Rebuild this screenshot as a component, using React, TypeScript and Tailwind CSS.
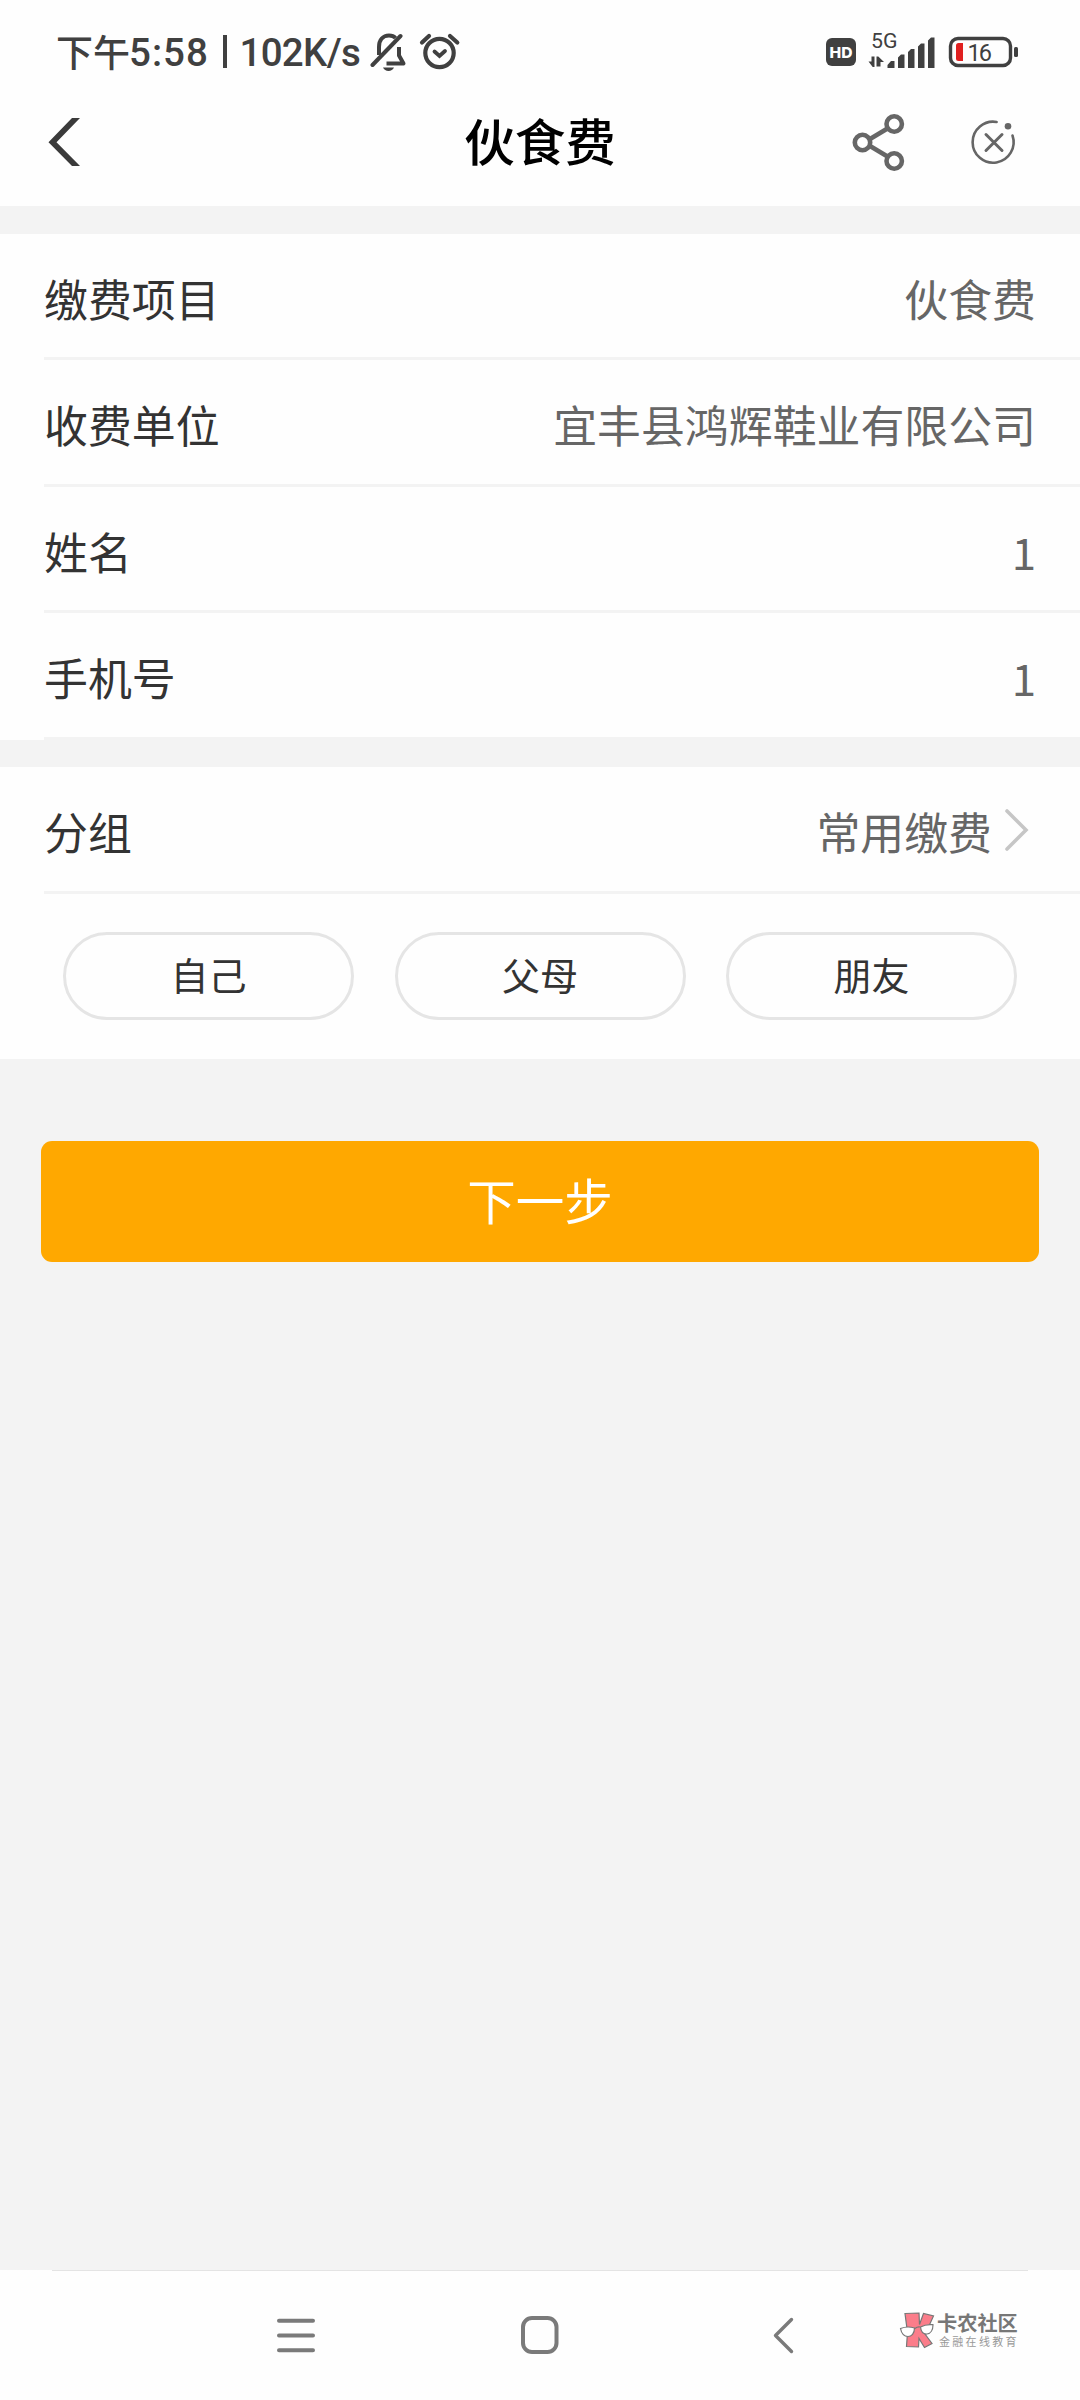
import clsx from "clsx";

const details = [
  { label: "缴费项目", value: "伙食费" },
  { label: "收费单位", value: "宜丰县鸿辉鞋业有限公司" },
  { label: "姓名", value: "1" },
  { label: "手机号", value: "1" },
];

const groups = ["自己", "父母", "朋友"];

const StatusBar = () => (
  <div className="flex h-[84px] items-start text-[#404040]">
    <div className="flex h-[84px] pl-[56px] pt-[24px] text-[37px] font-medium leading-[54px] whitespace-pre">
      <span className="w-[73px]">下午</span>
      <span className="w-[90px] font-[Roboto] text-[38.500px] leading-[57px] font-medium tracking-[1px]">5:58</span>
      <span className="mt-[11px] mr-[13px] ml-[4px] h-[33px] w-[3.500px] bg-[#404040]" />
      <span className="w-[130.500px] font-[Roboto] text-[38.500px] leading-[57px] font-medium tracking-[-0.700px]">102K/s</span>
    </div>
    <svg className="mt-[30px] h-[44px] w-[100px]" viewBox="370 30 100 44" fill="none" stroke="#404040" strokeWidth="4">
      <path d="M379 55V47c0-7 4-11.500 10-11.500 3 0 5 .8 6.500 2.500" />
      <path d="M399 47v8.500l4.500 8h-17" strokeLinejoin="round" />
      <path d="M372.500 65 400.500 36" strokeLinecap="round" />
      <path d="M383 67.500h11c-1 2.300-3 3.500-5.500 3.500s-4.500-1.200-5.500-3.500Z" fill="#404040" stroke="none" />
      <circle cx="439.500" cy="53" r="14.200" strokeWidth="4.200" />
      <path d="m434.500 51.500 5 4.500 5.500-5" strokeWidth="3.800" strokeLinecap="round" />
      <path d="m422 42.500 7-6.500M457.300 42.500 450 36" strokeWidth="4.200" strokeLinecap="round" />
    </svg>
    <svg className="mt-[20px] ml-auto mr-[60px] h-[54px] w-[196px]" viewBox="824 20 196 54" fill="#404040">
      <rect x="826" y="38" width="30" height="28" rx="6" />
      <text x="841" y="57.500" fontSize="15" fontWeight="800" fill="#fff" textAnchor="middle" fontFamily="Inter" textLength="23" lengthAdjust="spacingAndGlyphs">HD</text>
      <text x="871" y="47.500" fontSize="20.500" fontFamily="Roboto" textLength="26.500" lengthAdjust="spacingAndGlyphs">5G</text>
      <path d="M868.500 61.500h3V56.500h3v10.500h-1.800ZM876.500 56.500h1.800l5.700 5.500h-3.500V66.500h-4Z" />
      <path d="M887.500 68v-3l3.500-4h3.500v7ZM898 68V57.500l3-3h3.500V68ZM908 68V52l3-3h3.500V68ZM918 68V46.500l3-3h3.500V68ZM928 68V40.500l3-3h3.500V68Z" />
      <rect x="950.500" y="38.500" width="60" height="27" rx="7.500" fill="none" stroke="#404040" strokeWidth="3.400" />
      <rect x="1014" y="47" width="4" height="10" rx="1.500" />
      <path d="M958.500 43h4.500v18h-4.500q-2.500 0-2.500-2.500v-13q0-2.500 2.500-2.500Z" fill="#e02020" />
      <text x="967.500" y="61" fontSize="23.500" fontFamily="Roboto" textLength="24.500">16</text>
    </svg>
  </div>
);

const Header = () => (
  <header className="flex h-[122px] items-start justify-between">
    <svg className="mt-[28px] ml-[44px] h-[60px] w-[196px]" viewBox="44 112 196 60" fill="#3a3a3a">
      <path d="M72 118h8L56.500 142.300 80 166h-8L48.500 142.300Z" />
    </svg>
    <h1 className="mt-[19px] text-[50.500px] font-medium leading-[72px] text-black">伙食费</h1>
    <svg className="mt-[28px] mr-[60px] h-[60px] w-[180px]" viewBox="840 112 180 60" fill="none" stroke="#666" strokeWidth="4.600">
      <circle cx="862.500" cy="142.500" r="7.700" />
      <circle cx="894.200" cy="124" r="7.700" />
      <circle cx="894.200" cy="161" r="7.700" />
      <path d="m870 139 17.500-10.500M870 146l17.500 10.500" />
      <g strokeWidth="2.600" strokeLinecap="round">
        <path d="M996.600 122A20.500 20.500 0 1 0 1012.500 135.500" />
        <path d="m986 134.500 16 16M1002 134.500l-16 16" strokeWidth="3" />
      </g>
      <circle cx="1008" cy="126.300" r="3.300" fill="#666" stroke="none" />
    </svg>
  </header>
);

const Row = ({ label, value, arrow = false }: { label: string; value: string; arrow?: boolean }) => (
  <div
    className={clsx(
      "ml-[44px] flex h-[126.500px] items-center border-b-[3px] border-[#f3f3f3] pt-[5px] text-[43.900px] leading-[64px]",
      arrow ? "pr-[51px]" : "pr-[44px]"
    )}
  >
    <span className="text-[#333]">{label}</span>
    <span className="ml-auto text-[#666]">{value}</span>
    {arrow && (
      <svg className="ml-[12px] mb-[3px] h-[42px] w-[25px]" viewBox="0 0 25 42" fill="none" stroke="#c6c6c6" strokeWidth="3.600">
        <path d="m3 2 19 19L3 40" strokeLinecap="round" />
      </svg>
    )}
  </div>
);

const NavBar = () => (
  <nav className="flex h-[130px] flex-col bg-[#fefefe]">
    <div className="mx-[52px] h-px bg-[#e4e4e4]" />
    <div className="flex pt-[39px]">
      <svg className="ml-[270px] h-[50px] w-[540px]" viewBox="270 2310 540 50" fill="none" stroke="#7a7a7a" strokeWidth="4">
        <path d="M279 2320.800h34M279 2335.500h34M279 2350.300h34" strokeLinecap="round" />
        <rect x="523" y="2318" width="33.500" height="34" rx="9" />
        <path d="m791.500 2319.500-16 16 16 16" strokeWidth="3.400" strokeLinecap="round" strokeLinejoin="round" />
      </svg>
      <svg className="ml-[88px] h-[40px] w-[39px]" viewBox="898 2310 39 40" fill="#fb7d8a" stroke="#777" strokeWidth="1.200">
        <path d="M905 2313.500l14-.5.500 11.500 4-11 10 2.500-5 11-5 5 8.500 11.500-7.500 4-5.500-9-.500 8.500-12-.500 1-14Z" />
        <path d="M900.500 2328.500c5-2 9-2 14-.5 0 5.500-3 8.500-6.500 8.500s-6.500-3-7.500-8ZM920.500 2327c3.500-2 8-2.800 12.500-2.300 0 5.300-2.500 9-6 9.300-3.500.3-6-2.500-6.500-7Z" fill="#fff" />
        <path d="M915 2328.500q2.500-2 5-1.500" fill="none" />
      </svg>
      <div className="mt-[2px] flex flex-col whitespace-nowrap text-[#777]">
        <span className="text-[20.200px] font-bold leading-[22px]">卡农社区</span>
        <span className="pl-[2px] text-[11px] leading-[14px] tracking-[2.300px] text-[#999]">金融在线教育</span>
      </div>
    </div>
  </nav>
);

export default function App() {
  return (
    <div className="flex h-[2400px] w-[1080px] flex-col overflow-hidden bg-[#f3f3f3] font-['Noto_Sans_CJK_SC',sans-serif]">
      <div className="bg-[#fefefe]">
        <StatusBar />
        <Header />
      </div>

      <section className="mt-[27.500px] bg-[#fefefe]">
        {details.map((item) => (
          <Row key={item.label} label={item.label} value={item.value} />
        ))}
      </section>

      <section className="mt-[27.500px] h-[292px] bg-[#fefefe]">
        <Row label="分组" value="常用缴费" arrow />
        <div className="mx-[63px] flex justify-between pt-[38.500px]">
          {groups.map((name) => (
            <button
              key={name}
              className="h-[88px] w-[291px] rounded-full border-[3px] border-[#e5e5e5] pb-[5px] text-[38px] text-[#333]"
            >
              {name}
            </button>
          ))}
        </div>
      </section>

      <button className="mx-[41px] mt-[82px] h-[121px] rounded-[11px] bg-[#ffa800] pb-[4px] text-[48.500px] text-white">
        下一步
      </button>

      <div className="flex-1" />
      <NavBar />
    </div>
  );
}
